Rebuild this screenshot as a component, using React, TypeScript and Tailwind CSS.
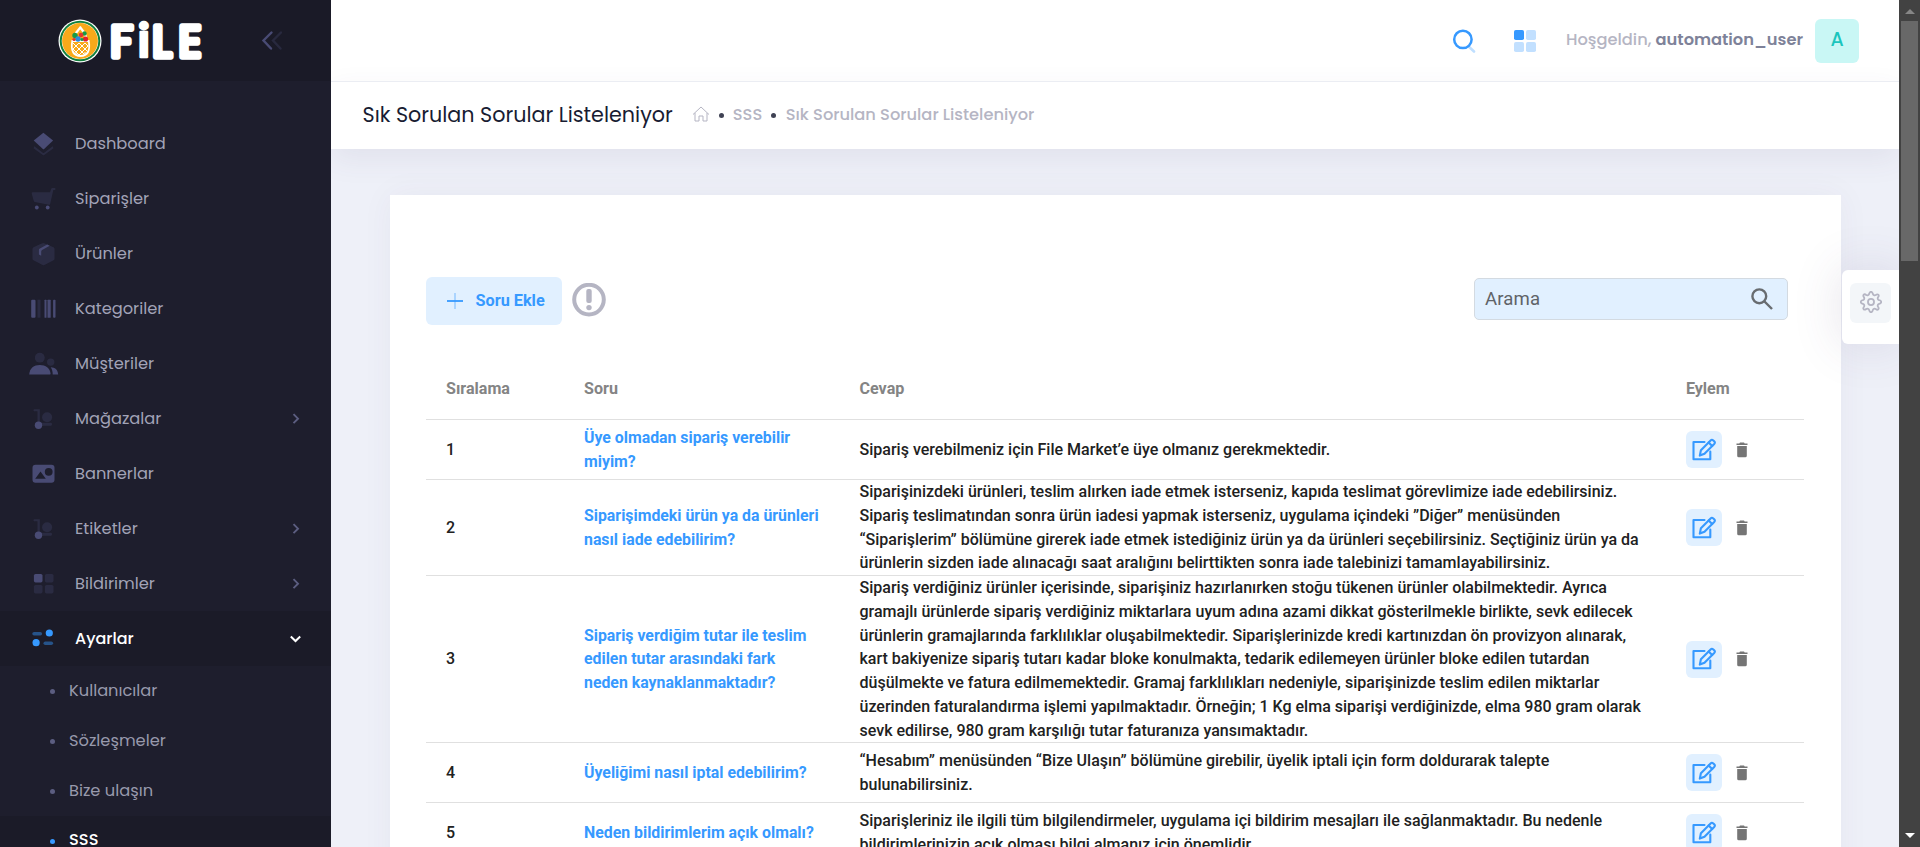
import type { ReactNode } from 'react';

type IconName =
  | 'layers' | 'cart' | 'box' | 'barcode' | 'users' | 'trolley' | 'image' | 'grid' | 'sliders';

function MenuIcon({ name }: { name: IconName }) {
  const shapes: Record<IconName, ReactNode> = {
    layers: (
      <>
        <path d="M13.9 4 L23.600 11.800 L14.6 20.2 Q14 20.7 13.4 20.2 L4.200 11.800 Z" />
        <path opacity=".3" d="M4.9 17.5 L13.3 24 Q14 24.5 14.7 24 L23.1 17.5 L24 19.6 L14.7 26.2 Q14 26.7 13.3 26.2 L4 19.6 Z" />
      </>
    ),
    cart: (
      <>
        <path opacity=".3" d="M3.2 8.6 H20.6 L21.6 5.2 Q22 4.2 23 4.2 H25.2 Q26 4.2 26 5.2 Q26 6.2 25.2 6.2 H23.8 L20.6 20.6 Q20.4 21.2 19.6 21.1 L5.2 18.2 Q4.5 18 4.3 17.4 L2.2 9.8 Q2 8.6 3.2 8.6 Z" />
        <circle cx="7.3" cy="23.8" r="1.9" />
        <circle cx="18.2" cy="23.8" r="1.9" />
      </>
    ),
    box: (
      <>
        <path opacity=".3" d="M14 4.2 L24 8.6 Q25 9.1 25 10.2 V20 Q25 21 24 21.6 L14.9 26.4 Q14 26.9 13.1 26.4 L4 21.6 Q3 21 3 20 V10.2 Q3 9.1 4 8.6 L11 5.3 Z" />
        <path d="M17.7 5.8 L20.2 7 L12.6 11.3 Q11.7 11.8 11.7 12.8 V17 L9.4 15.8 V11 Q9.4 10.3 10 10 Z" />
      </>
    ),
    barcode: (
      <>
        <rect x="1.7" y="6" width="4.3" height="18" rx="1" />
        <rect opacity=".3" x="8" y="6" width="3" height="18" />
        <rect x="15" y="6" width="2" height="18" rx=".5" />
        <rect x="18" y="6" width="3.2" height="18" rx=".5" />
        <rect x="23.6" y="6" width="2.4" height="18" rx=".8" />
      </>
    ),
    users: (
      <>
        <circle opacity=".3" cx="10.3" cy="9" r="4.9" />
        <circle opacity=".3" cx="21.2" cy="13.4" r="3.7" />
        <path d="M-.3 25.7 C.2 19.4 4.4 16.3 10.3 16.3 C16.200 16.300 20.500 19.200 21.100 25 Q21.100 25.700 20.500 25.700 Z" />
        <path d="M21.200 18.600 C25.500 18.700 28.300 21 28.700 25.700 H23.200 C23.200 23 22.500 20.500 21.200 18.600 Z" />
      </>
    ),
    trolley: (
      <>
        <path opacity=".3" d="M4.900 5.500 H10.300 V19 H21.500 Q22.500 19.200 22.500 20.500 Q22.500 21.800 21.500 22 H8 V7.600 H4.900 Q4 7.400 4 6.500 Q4 5.600 4.900 5.500 Z" />
        <circle opacity=".3" cx="17.600" cy="13.500" r="5" />
        <circle cx="9" cy="21.600" r="3.700" />
      </>
    ),
    image: (
      <path fillRule="evenodd" d="M6 6 H22 Q25 6 25 9 V21 Q25 24 22 24 H6 Q3 24 3 21 V9 Q3 6 6 6 Z M11 12.800 L5.700 20 H16.300 Z M19.200 9.200 A3.900 3.900 0 1 0 19.200 17 A3.900 3.900 0 1 0 19.200 9.200 Z" />
    ),
    grid: (
      <>
        <rect x="4.400" y="5.200" width="8.600" height="8.600" rx="1.700" />
        <rect opacity=".3" x="15.400" y="5.200" width="8.600" height="8.600" rx="1.700" />
        <rect opacity=".3" x="4.400" y="16.200" width="8.600" height="8.600" rx="1.700" />
        <rect opacity=".3" x="15.400" y="16.200" width="8.600" height="8.600" rx="1.700" />
      </>
    ),
    sliders: (
      <>
        <rect opacity=".45" x="2.800" y="8.200" width="9.800" height="3.600" rx="1.800" />
        <circle cx="19.800" cy="9.300" r="3.600" />
        <circle cx="6.600" cy="19" r="3.600" />
        <rect opacity=".45" x="14" y="17.800" width="9.600" height="3.600" rx="1.800" />
      </>
    ),
  };
  return (
    <svg
      viewBox="-.5 .3 28 30"
      className={`h-[30px] w-7 shrink-0 overflow-visible ${name === 'sliders' ? 'fill-[#3699ff]' : 'fill-[#494b74]'}`}
    >
      {shapes[name]}
    </svg>
  );
}

const menu: { label: string; icon: IconName; arrow?: boolean }[] = [
  { label: 'Dashboard', icon: 'layers' },
  { label: 'Siparişler', icon: 'cart' },
  { label: 'Ürünler', icon: 'box' },
  { label: 'Kategoriler', icon: 'barcode' },
  { label: 'Müşteriler', icon: 'users' },
  { label: 'Mağazalar', icon: 'trolley', arrow: true },
  { label: 'Bannerlar', icon: 'image' },
  { label: 'Etiketler', icon: 'trolley', arrow: true },
  { label: 'Bildirimler', icon: 'grid', arrow: true },
];

const rows: { no: number; question: string[]; answer: string[]; height: string }[] = [
  {
    no: 1,
    height: 'h-[60px]',
    question: ['Üye olmadan sipariş verebilir', 'miyim?'],
    answer: ['Sipariş verebilmeniz için File Market’e üye olmanız gerekmektedir.'],
  },
  {
    no: 2,
    height: 'h-24',
    question: ['Siparişimdeki ürün ya da ürünleri', 'nasıl iade edebilirim?'],
    answer: [
      'Siparişinizdeki ürünleri, teslim alırken iade etmek isterseniz, kapıda teslimat görevlimize iade edebilirsiniz.',
      'Sipariş teslimatından sonra ürün iadesi yapmak isterseniz, uygulama içindeki ”Diğer” menüsünden',
      '“Siparişlerim” bölümüne girerek iade etmek istediğiniz ürün ya da ürünleri seçebilirsiniz. Seçtiğiniz ürün ya da',
      'ürünlerin sizden iade alınacağı saat aralığını belirttikten sonra iade talebinizi tamamlayabilirsiniz.',
    ],
  },
  {
    no: 3,
    height: 'h-[167px]',
    question: ['Sipariş verdiğim tutar ile teslim', 'edilen tutar arasındaki fark', 'neden kaynaklanmaktadır?'],
    answer: [
      'Sipariş verdiğiniz ürünler içerisinde, siparişiniz hazırlanırken stoğu tükenen ürünler olabilmektedir. Ayrıca',
      'gramajlı ürünlerde sipariş verdiğiniz miktarlara uyum adına azami dikkat gösterilmekle birlikte, sevk edilecek',
      'ürünlerin gramajlarında farklılıklar oluşabilmektedir. Siparişlerinizde kredi kartınızdan ön provizyon alınarak,',
      'kart bakiyenize sipariş tutarı kadar bloke konulmakta, tedarik edilemeyen ürünler bloke edilen tutardan',
      'düşülmekte ve fatura edilmemektedir. Gramaj farklılıkları nedeniyle, siparişinizde teslim edilen miktarlar',
      'üzerinden faturalandırma işlemi yapılmaktadır. Örneğin; 1 Kg elma siparişi verdiğinizde, elma 980 gram olarak',
      'sevk edilirse, 980 gram karşılığı tutar faturanıza yansımaktadır.',
    ],
  },
  {
    no: 4,
    height: 'h-[60px]',
    question: ['Üyeliğimi nasıl iptal edebilirim?'],
    answer: [
      '“Hesabım” menüsünden “Bize Ulaşın” bölümüne girebilir, üyelik iptali için form doldurarak talepte',
      'bulunabilirsiniz.',
    ],
  },
  {
    no: 5,
    height: 'h-[60px]',
    question: ['Neden bildirimlerim açık olmalı?'],
    answer: [
      'Siparişleriniz ile ilgili tüm bilgilendirmeler, uygulama içi bildirim mesajları ile sağlanmaktadır. Bu nedenle',
      'bildirimlerinizin açık olması bilgi almanız için önemlidir.',
    ],
  },
];

function Logo() {
  return (
    <svg viewBox="0 0 148 46" className="h-[46px] w-[148px] overflow-visible">
      <circle cx="22" cy="23" r="21.500" fill="#fff" />
      <circle cx="22" cy="23" r="20.300" fill="#12803c" />
      <circle cx="22" cy="23" r="18.300" fill="#fff" />
      <circle cx="22" cy="23" r="17.900" fill="#f9a91a" />
      <path d="M22.300 9.500 C19.500 12.500 17.800 14.500 16.500 18.500 M22.300 9.500 C25 12.500 26.700 14.500 27.800 18.500" fill="none" stroke="#fff" strokeWidth="2.400" strokeLinecap="round" />
      <path d="M13.500 22 H31.500 Q34.500 38.500 22.500 39 Q10.500 38.500 13.500 22 Z" fill="#fff" />
      <path d="M15 24 H30 Q32 36.500 22.500 37 Q13 36.500 15 24 Z" fill="#f9a91a" />
      <path d="M15 25 l3 3 3-3 3 3 3-3 3 3 M15 31 l3-3 3 3 3-3 3 3 3-3 M15 31 l3 3 3-3 3 3 3-3 3 3 M18 37 l0-3 3 3 3-3 3 3 0-3" fill="none" stroke="#fff" strokeWidth="1" />
      <circle cx="17" cy="17.500" r="2.700" fill="#189a48" />
      <circle cx="26.500" cy="15.500" r="2.200" fill="#189a48" />
      <circle cx="23" cy="17" r="2.300" fill="#e3342f" />
      <circle cx="20" cy="21" r="2.700" fill="#2a8be0" />
      <circle cx="27.500" cy="21" r="2.600" fill="#e3202b" />
      <circle cx="16" cy="21.500" r="1.600" fill="#e3342f" />
      <circle cx="24" cy="21.500" r="1.500" fill="#189a48" />
      <text
        y="39.300"
        fill="#fff"
        stroke="#fff"
        strokeWidth="5.600"
        strokeLinejoin="round"
        className="font-['Poppins','Inter',sans-serif] text-[45px]"
      >
        <tspan x="52.300">F</tspan>
        <tspan x="79.500" strokeWidth="2.400" className="font-semibold">i</tspan>
        <tspan x="94.300">L</tspan>
        <tspan x="120.600">E</tspan>
      </text>
    </svg>
  );
}

function Sidebar() {
  return (
    <aside className="flex w-[331px] shrink-0 flex-col overflow-hidden bg-[#1e1e2d] text-[16.25px]">
      <div className="flex h-[81px] shrink-0 items-center bg-[#1a1a27] pl-[58px]">
        <Logo />
        <svg viewBox="0 0 22 22" className="ml-[54px] h-[22px] w-[22px] fill-none stroke-[#494b74] stroke-[2.4]">
          <path d="M11.500 2.500 L3.500 10.500 L11 18.500" strokeLinecap="round" />
          <path opacity=".3" d="M21 2.500 L13 10.500 L20.500 18.500" strokeLinecap="round" />
        </svg>
      </div>
      <nav className="pt-[35px]">
        {menu.map((item) => (
          <div key={item.label} className="flex h-[55px] items-center pl-[29px] pr-[31px] text-[#a2a3b7]">
            <MenuIcon name={item.icon} />
            <span className="ml-[18px] flex-1 pt-[2px]">{item.label}</span>
            {item.arrow && (
              <svg viewBox="0 0 8 12" className="h-3 w-2 fill-none stroke-[#5c5e81] stroke-[1.9]">
                <path d="M1.500 1.200 L6 5.700 L1.500 10.200" />
              </svg>
            )}
          </div>
        ))}
        <div className="flex h-[55px] items-center bg-[#1b1b28] pl-[29px] pr-[30px] font-medium text-white">
          <MenuIcon name="sliders" />
          <span className="ml-[18px] flex-1 text-[16px]">Ayarlar</span>
          <svg viewBox="0 0 11 8" className="h-2 w-[11px] fill-none stroke-white stroke-2">
            <path d="M.8 1.500 L5.500 6 L10.200 1.500" />
          </svg>
        </div>
        {['Kullanıcılar', 'Sözleşmeler', 'Bize ulaşın'].map((label) => (
          <div key={label} className="flex h-[50px] items-center pl-[50px] text-[#9899ac]">
            <span className="mt-px h-[5px] w-[5px] rounded-full bg-[#5c5e81]" />
            <span className="ml-[14px]">{label}</span>
          </div>
        ))}
        <div className="flex h-[50px] items-center bg-[#1b1b28] pl-[50px] font-medium text-white">
          <span className="mt-px h-[5px] w-[5px] rounded-full bg-[#3699ff]" />
          <span className="ml-[14px] pb-px">SSS</span>
        </div>
      </nav>
    </aside>
  );
}

function Header() {
  return (
    <header className="flex h-[81px] shrink-0 items-center justify-end bg-white pr-10">
      <svg viewBox="0 0 24 24" className="h-6 w-6 fill-none">
        <path d="M17.200 18 L22 22.500" stroke="#bfdfff" strokeWidth="2.600" strokeLinecap="round" />
        <circle cx="10.900" cy="10.400" r="8.700" stroke="#3699ff" strokeWidth="2.500" />
      </svg>
      <svg viewBox="0 0 22 22" className="ml-[38px] h-[22px] w-[22px] fill-[#3699ff]">
        <rect width="10" height="10" rx="1.800" />
        <rect opacity=".3" x="12" width="10" height="10" rx="1.800" />
        <rect opacity=".3" y="12" width="10" height="10" rx="1.800" />
        <rect opacity=".3" x="12" y="12" width="10" height="10" rx="1.800" />
      </svg>
      <span className="ml-[30px] text-[16.25px] font-medium text-[#b5b5c3]">
        Hoşgeldin, <span className="font-semibold text-[#7e8299]">automation_user</span>
      </span>
      <span className="ml-3 flex h-11 w-11 items-center justify-center rounded-md bg-[#c9f7f5] text-[19px] font-medium text-[#1bc5bd]">
        A
      </span>
    </header>
  );
}

function EditIcon() {
  return (
    <svg viewBox="0 0 26 24" className="h-6 w-[26px] fill-none stroke-[#3699ff] stroke-[2.1]" strokeLinejoin="round" strokeLinecap="round">
      <path d="M13.500 4 H2.500 V21.300 H19.300 V13.500" />
      <path d="M8.800 17.600 L9.900 12.300 L19.600 2.400 Q20.900 1.100 22.300 2.400 L23.200 3.300 Q24.500 4.600 23.200 6 L13.500 15.800 Z" />
      <path d="M17.600 4.400 L21.200 8" />
    </svg>
  );
}

function TrashIcon() {
  return (
    <svg viewBox="0 0 12 16" className="h-4 w-3 fill-[#757575]">
      <path d="M4 .6 H8 L8.700 1.400 H11.500 V3 H.5 V1.400 H3.300 Z M1.200 4 H10.800 V13.700 Q10.800 15.200 9.300 15.200 H2.700 Q1.200 15.200 1.200 13.700 Z" />
    </svg>
  );
}

const columns = 'grid grid-cols-[138px_275.5px_826.4px_136px] items-center border-b border-[#e0e0e0] pl-[20.500px]';

function FaqCard() {
  return (
    <section className="mx-auto h-[900px] w-[1451px] shrink-0 bg-white pl-9 pr-[37px] pt-[82px] font-['Roboto',sans-serif] shadow-[0_0_30px_rgba(82,63,105,0.05)]">
      <div className="flex items-start">
        <button className="flex h-12 w-[136px] items-center rounded-md bg-[#e1f0ff] pl-[21px] text-[16.25px] font-bold text-[#3699ff]">
          <svg viewBox="0 0 16 16" className="h-4 w-4 stroke-[#3699ff] stroke-[1.8]">
            <path d="M0 8 H16" />
            <path opacity=".35" d="M8 0 V16" />
          </svg>
          <span className="ml-[13px]">Soru Ekle</span>
        </button>
        <svg viewBox="0 0 34 34" className="ml-[10px] mt-[6px] h-[34px] w-[34px]">
          <circle cx="17" cy="16.600" r="14.800" fill="none" stroke="#b5b5c3" strokeWidth="4" />
          <rect x="14.300" y="6" width="5.400" height="14" rx="2" fill="#b5b5c3" />
          <circle cx="17" cy="24.600" r="2.700" fill="#b5b5c3" />
        </svg>
        <div className="ml-auto mr-4 mt-px flex h-[42px] w-[314px] items-center justify-between rounded-[5px] border border-[#d3dae1] bg-[#e1f0ff] pl-[10.500px] pr-[14px] text-[18.600px] text-[#5f6368]">
          <span className="pt-px tracking-[0.1px]">Arama</span>
          <svg viewBox="0 0 22 22" className="h-[22px] w-[22px] fill-none stroke-[#686c70] stroke-[2.4]">
            <circle cx="8.300" cy="8.300" r="6.900" />
            <path d="M13.500 13.500 L21 21" />
          </svg>
        </div>
      </div>
      <div className="pt-[33px]">
        <div className={`${columns} h-[62px] text-[16.100px] font-bold text-[#848484]`}>
          <span className="pt-[2px]">Sıralama</span>
          <span className="pt-[2px]">Soru</span>
          <span className="pt-[2px]">Cevap</span>
          <span className="pt-[2px]">Eylem</span>
        </div>
        {rows.map((row) => (
          <div key={row.no} className={`${columns} ${row.height} whitespace-nowrap text-[16.020px]/[23.750px] font-medium text-[#212121]`}>
            <span>{row.no}</span>
            <div className="text-[15.850px] font-bold text-[#3699ff]">
              {row.question.map((line) => <p key={line}>{line}</p>)}
            </div>
            <div>
              {row.answer.map((line) => <p key={line}>{line}</p>)}
            </div>
            <div className="flex items-center">
              <span className="flex h-[37px] w-9 items-center justify-center rounded-md bg-[#e1f0ff]">
                <EditIcon />
              </span>
              <span className="ml-[14.500px]"><TrashIcon /></span>
            </div>
          </div>
        ))}
      </div>
    </section>
  );
}

export default function App() {
  return (
    <div className="relative flex h-[847px] w-[1920px] overflow-hidden bg-[#eef0f8] font-['Poppins','Inter',sans-serif]">
      <Sidebar />
      <main className="flex min-w-0 flex-1 flex-col overflow-hidden">
        <Header />
        <div className="flex h-[68px] shrink-0 items-center border-t border-[#ebedf3] bg-white pl-[31.500px] shadow-[0_10px_30px_rgba(82,63,105,0.08)]">
          <h1 className="pb-px text-[20.700px] text-[#181c32]">Sık Sorulan Sorular Listeleniyor</h1>
          <div className="ml-[19px] flex items-center text-[16.25px] font-medium text-[#b5b5c3]">
            <svg viewBox="0 0 18 16" className="mb-[3px] h-4 w-[18px] fill-none stroke-[#b5b5c3] stroke-1">
              <path d="M1 8.500 L9 1 L17 8.500 M3 7 V15 H7 V10 H11 V15 H15 V7" />
            </svg>
            <span className="mx-[9px] h-[5px] w-[5px] rounded-full bg-[#3f4254]" />
            <span>SSS</span>
            <span className="mx-[9px] h-[5px] w-[5px] rounded-full bg-[#3f4254]" />
            <span className="ml-[.5px]">Sık Sorulan Sorular Listeleniyor</span>
          </div>
        </div>
        <div className="flex pt-[46px]">
          <FaqCard />
        </div>
      </main>
      <div className="flex w-[21px] shrink-0 flex-col items-center justify-between bg-[#424242] py-[9px]">
        <div className="flex flex-col items-center">
          <svg viewBox="0 0 10 5" className="h-[5px] w-[10px] fill-[#868686]"><path d="M0 5 L5 0 L10 5 Z" /></svg>
          <div className="mt-[7px] h-60 w-[17px] bg-[#686868]" />
        </div>
        <svg viewBox="0 0 10 5" className="h-[5px] w-[10px] fill-white"><path d="M0 0 L5 5 L10 0 Z" /></svg>
      </div>
      <div className="pointer-events-none absolute inset-y-0 left-[331px] w-[1568px] overflow-hidden">
        <div className="absolute right-0 top-[270px] h-[74px] w-[57px] rounded-l-md bg-white pl-2 pt-[13px] shadow-[0_0_50px_rgba(82,63,105,0.15)]">
          <span className="flex h-10 w-[41px] items-center justify-center rounded-md bg-[#f3f6f9]">
            <svg viewBox="1.500 1.500 21 21" className="mt-[-2px] h-[22px] w-[22px] fill-none stroke-[#b5b5c3] stroke-[1.7]" strokeLinejoin="round">
              <circle cx="12" cy="12" r="2.900" />
              <path d="M10.300 4.200 C10.700 1.600 13.300 1.600 13.700 4.200 C14 5.400 15.400 6 16.500 5.300 C18.600 3.800 20.300 5.400 18.700 7.500 C18 8.600 18.600 10 19.800 10.300 C22.400 10.700 22.400 13.300 19.800 13.700 C18.600 14 18 15.400 18.700 16.500 C20.200 18.600 18.600 20.300 16.500 18.700 C15.400 18 14 18.600 13.700 19.800 C13.300 22.400 10.700 22.400 10.300 19.800 C10 18.600 8.600 18 7.500 18.700 C5.400 20.200 3.700 18.600 5.300 16.500 C6 15.400 5.400 14 4.200 13.700 C1.600 13.300 1.600 10.700 4.200 10.300 C5.400 10 6 8.600 5.300 7.500 C3.800 5.400 5.400 3.700 7.500 5.300 C8.600 6 10 5.400 10.300 4.200 Z" />
            </svg>
          </span>
        </div>
      </div>
    </div>
  );
}
